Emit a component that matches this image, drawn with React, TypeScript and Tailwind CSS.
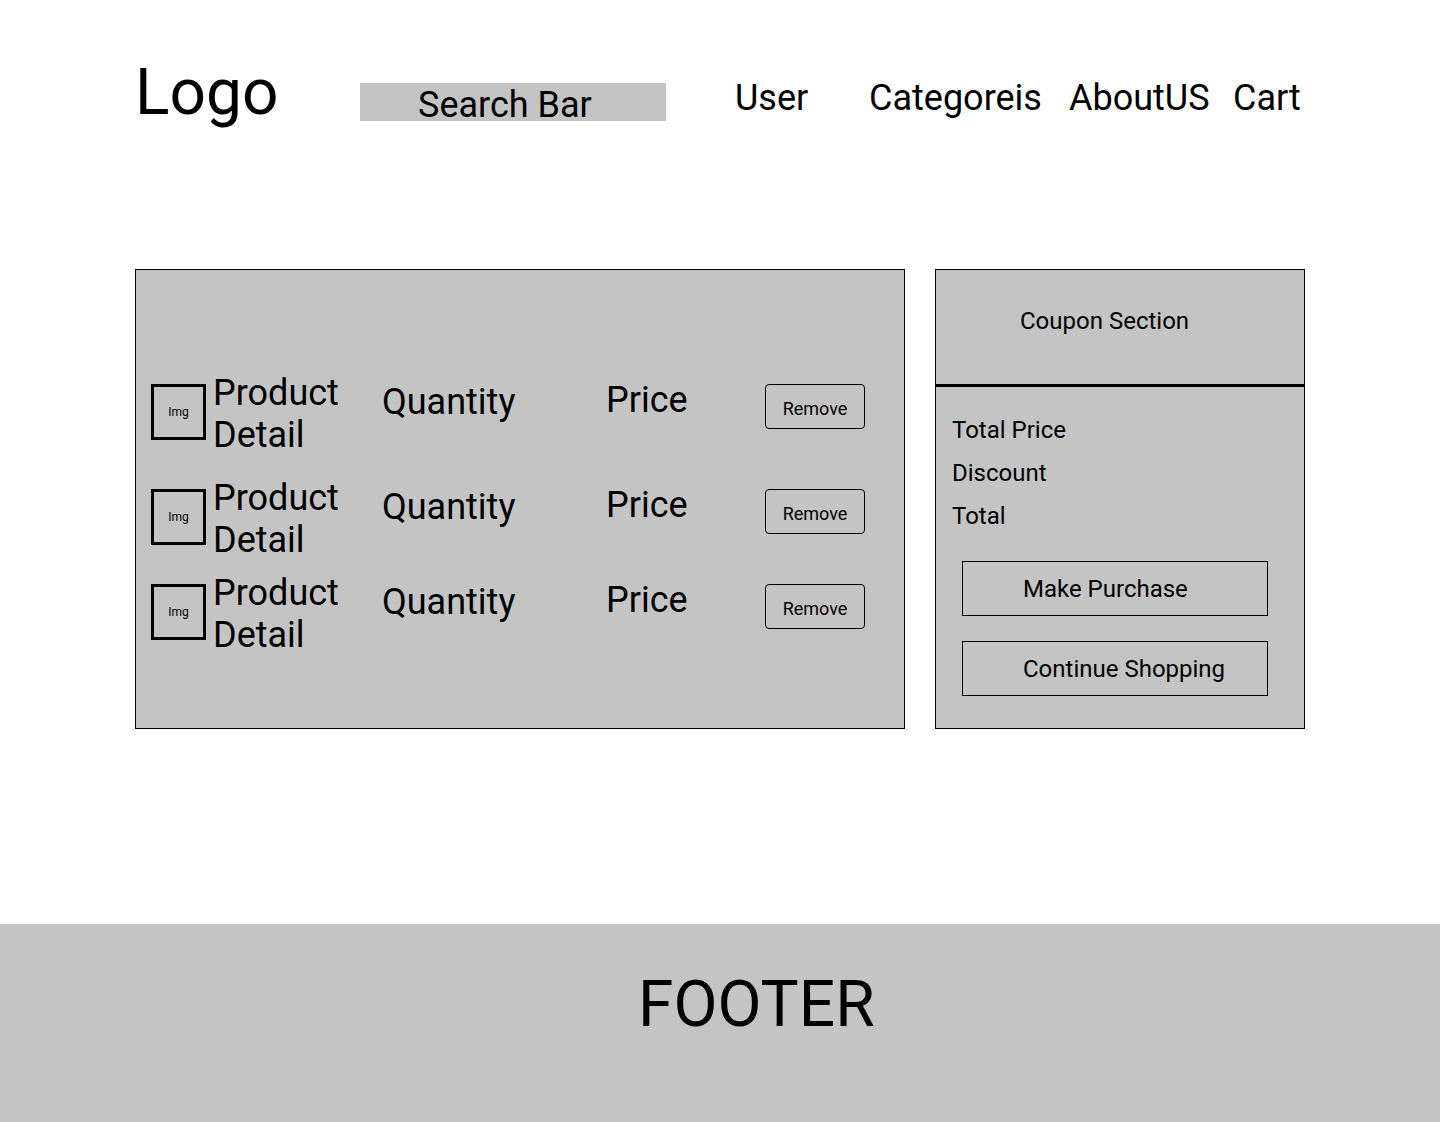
import React from 'react';

const rows = [
  { id: 1, gap: 'mt-[102px]' },
  { id: 2, gap: 'mt-[21px]' },
  { id: 3, gap: 'mt-[11px]' },
];

const CartRow: React.FC<{ gap: string }> = ({ gap }) => {
  return (
    <div className={`flex items-start pl-[15px] ${gap}`}>
      <div className="mt-[12px] w-[55px] h-[56px] border-[3px] border-black flex items-center justify-center">
        <span className="text-[12px] leading-none">Img</span>
      </div>
      <div className="ml-[7px] w-[169px] text-[36px] leading-[42px]">
        Product
        <br />
        Detail
      </div>
      <div className="w-[224px] mt-[9px] text-[36px] leading-[42px]">Quantity</div>
      <div className="w-[159px] mt-[7px] text-[36px] leading-[42px]">Price</div>
      <button className="mt-[12px] w-[100px] h-[45px] rounded-[4px] border border-black text-[18px] leading-none flex items-center justify-center pt-[4px]">
        Remove
      </button>
    </div>
  );
};

export default function App() {
  return (
    <div className="min-h-[1122px] flex flex-col bg-white text-black font-['Roboto',sans-serif]">
      {/* header */}
      <header className="h-[269px] flex items-start pl-[135px]">
        <div className="w-[225px] mt-[61px] text-[64px] leading-none">Logo</div>
        <div className="mt-[83px] w-[306px] h-[38px] bg-[#c4c4c4] flex items-start pt-[4px] pl-[58px]">
          <span className="text-[36px] leading-none">Search Bar</span>
        </div>
        <nav className="ml-[69px] mt-[80px] flex items-start text-[36px] leading-none">
          <span className="w-[134px]">User</span>
          <span className="w-[200px]">Categoreis</span>
          <span className="w-[164px]">AboutUS</span>
          <span>Cart</span>
        </nav>
      </header>

      {/* cart */}
      <main className="flex gap-[30px] pl-[135px]">
        <section className="w-[770px] h-[460px] bg-[#c4c4c4] border border-black">
          {rows.map((r) => (
            <CartRow key={r.id} gap={r.gap} />
          ))}
        </section>

        <aside className="w-[370px] h-[460px] bg-[#c4c4c4] border border-black flex flex-col">
          <div className="h-[117px] border-b-[3px] border-black pt-[39px] pl-[84px]">
            <span className="text-[24px] leading-none">Coupon Section</span>
          </div>
          <div className="pt-[22px] pl-[16px] text-[24px] leading-[43px]">
            <div>Total Price</div>
            <div>Discount</div>
            <div>Total</div>
          </div>
          <div className="ml-[26px] mt-[23px] flex flex-col gap-[25px]">
            <button className="w-[306px] h-[55px] border border-black flex items-center pl-[60px] text-[24px] leading-none">
              Make Purchase
            </button>
            <button className="w-[306px] h-[55px] border border-black flex items-center pl-[60px] text-[24px] leading-none">
              Continue Shopping
            </button>
          </div>
        </aside>
      </main>

      <div className="flex-1" />

      <footer className="h-[198px] bg-[#c4c4c4] pl-[638px] pt-[49px]">
        <span className="text-[64px] leading-none">FOOTER</span>
      </footer>
    </div>
  );
}
